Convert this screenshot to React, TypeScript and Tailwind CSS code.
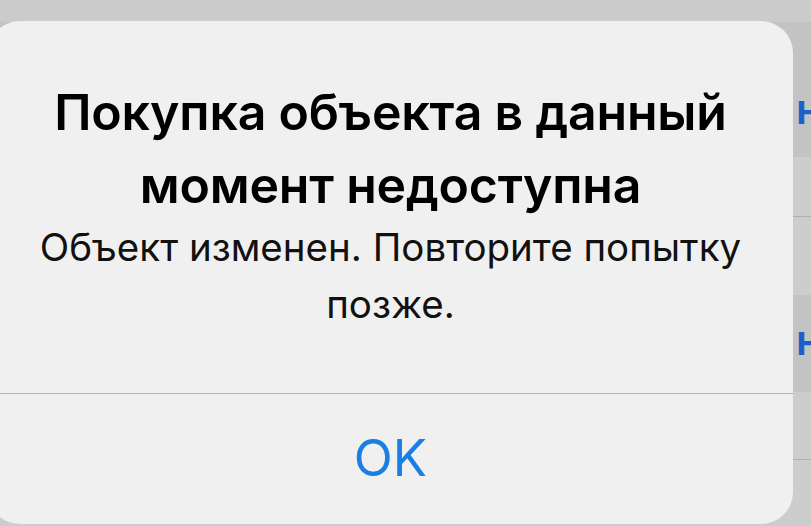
import React from 'react';

function BackgroundList() {
  return (
    <div className="flex flex-col w-full h-full">
      <div className="h-[22px] bg-[#cbcbcb]" />
      <div className="h-[135px] bg-[#c3c3c3] flex items-center pl-[797px] pt-[45px]">
        <span className="text-[31px] font-extrabold text-[#1c5fc9] leading-none">Н</span>
      </div>
      <div className="h-[60px] bg-[#cdcdcd] border-b border-[#b0b0b0]" />
      <div className="h-[78px] bg-[#cdcdcd]" />
      <div className="h-[97px] bg-[#c3c3c3] flex items-center pl-[797px]">
        <span className="text-[31px] font-extrabold text-[#1c5fc9] leading-none">Н</span>
      </div>
      <div className="h-[68px] bg-[#cdcdcd] border-b border-[#b0b0b0]" />
      <div className="flex-1 bg-[#cdcdcd]" />
    </div>
  );
}

export default function App() {
  return (
    <div
      className="relative w-[811px] h-[526px] overflow-hidden bg-[#cbcbcb]"
      style={{ fontFamily: 'Inter, "Noto Sans", sans-serif' }}
    >
      <BackgroundList />

      {/* alert */}
      <div className="absolute left-[-12px] top-[21px] w-[805px] h-[503px] rounded-[32px] bg-[#f0f0f0] flex flex-col">
        <div className="h-[372px] flex flex-col items-center pt-[55px]">
          <h1 className="text-[50px] font-semibold text-black leading-[73px] text-center tracking-[-0.2px] whitespace-nowrap">
            Покупка объекта в данный
            <br />
            момент недоступна
          </h1>
          <p className="mt-[-3px] text-[38.5px] text-[#111] leading-[57px] text-center whitespace-nowrap">
            Объект изменен. Повторите попытку
            <br />
            позже.
          </p>
        </div>
        <div className="h-px bg-[#b3b3b3]" />
        <button className="flex-1 flex items-center justify-center text-[51px] text-[#1a7fe3] leading-none pb-[4px]">
          OK
        </button>
      </div>
    </div>
  );
}
